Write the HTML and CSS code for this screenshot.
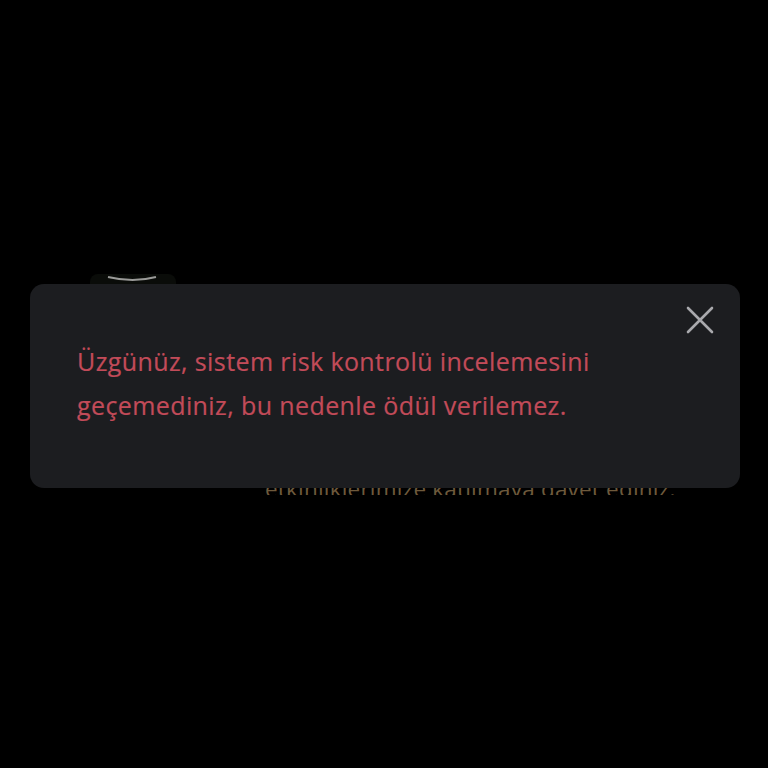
FILE: index.html
```html
<!DOCTYPE html>
<html lang="tr">
<head>
<meta charset="utf-8">
<link rel="stylesheet" href="styles.css">
</head>
<body>
<div class="page">
  <div class="behind">
    <div class="thumb">
      <svg width="86" height="10" viewBox="0 0 86 10"><path d="M18 3 Q43 9 66 3" stroke="#9a9a98" stroke-width="2" fill="none"/></svg>
    </div>
    <div class="clip">
      <div class="behind-text">etkinliklerimize katılmaya davet ediniz.</div>
    </div>
  </div>
  <div class="dialog">
    <button class="close" aria-label="Kapat">
      <svg width="28" height="28" viewBox="0 0 28 28"><path d="M2 2 L26 26 M26 2 L2 26" stroke="#a9a9ad" stroke-width="2.6" stroke-linecap="round" fill="none"/></svg>
    </button>
    <p class="msg">Üzgünüz, sistem risk kontrolü incelemesini geçemediniz, bu nedenle ödül verilemez.</p>
  </div>
</div>
</body>
</html>
```
FILE: styles.css
```css
html, body { margin: 0; padding: 0; background: #000; }
.page { position: relative; width: 768px; height: 768px; background: #000; overflow: hidden; font-family: "Open Sans", "Liberation Sans", sans-serif; }
.behind { padding-top: 274px; }
.thumb { margin-left: 90px; width: 86px; height: 10px; background: #0a0c09; border-radius: 8px 8px 0 0; }
.thumb svg { display: block; }
.clip { margin-top: 204px; margin-left: 265px; height: 7px; overflow: hidden; }
.behind-text { color: #6e5a3c; font-size: 22.5px; line-height: 30px; margin-top: -14px; letter-spacing: 0.2px; white-space: nowrap; }
.dialog { position: absolute; left: 30px; top: 284px; width: 710px; height: 204px; box-sizing: border-box; background: #1c1d20; border-radius: 14px; padding: 55px 47px 0 47px; }
.close { position: absolute; right: 26px; top: 22px; width: 28px; height: 28px; padding: 0; border: 0; background: none; }
.close svg { display: block; }
.msg { margin: 0; color: #c24b59; font-size: 25px; line-height: 44px; width: 580px; letter-spacing: 0.4px; -webkit-text-stroke: 0.2px #c24b59; }
```
